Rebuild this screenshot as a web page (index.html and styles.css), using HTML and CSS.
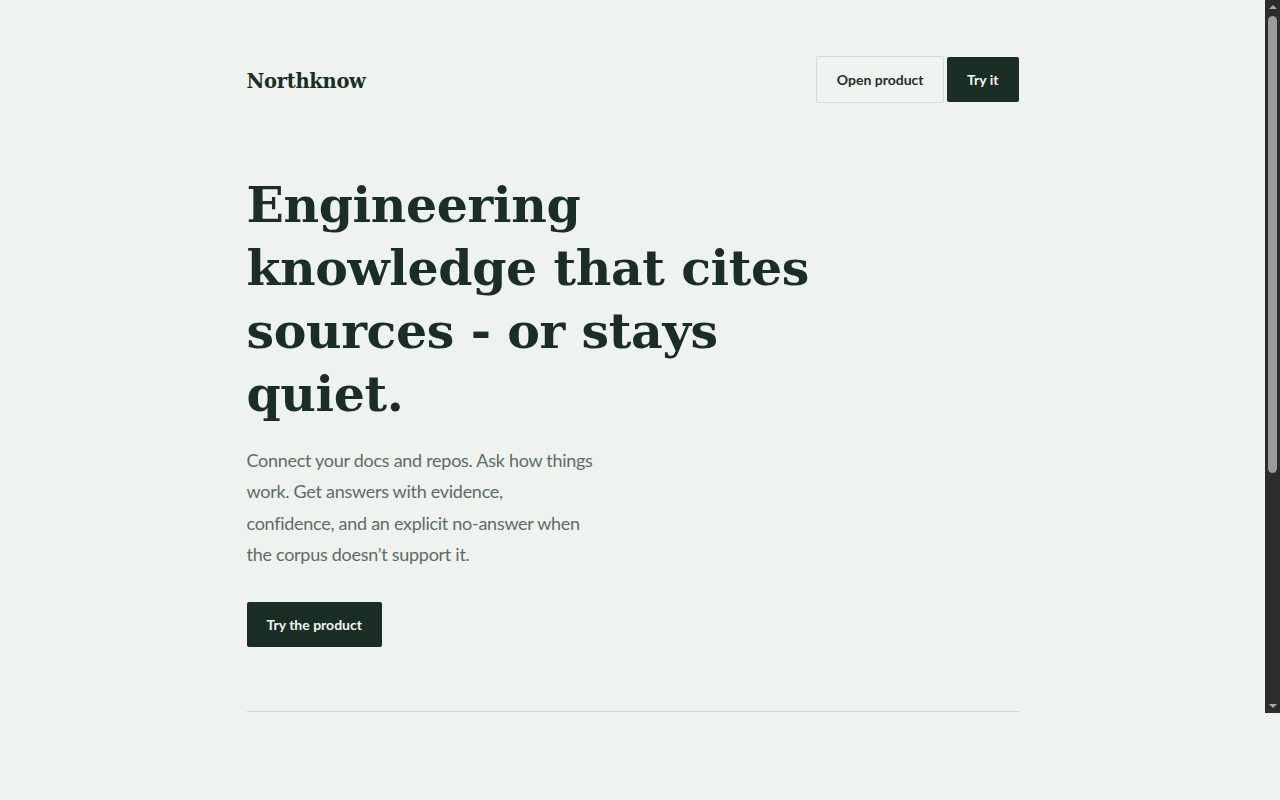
FILE: index.html
```html
<!DOCTYPE html>
<html lang="en">
<head>
<meta charset="utf-8">
<title>Northknow</title>
<link rel="stylesheet" href="styles.css">
</head>
<body>
<div class="frame">
  <div class="viewport">
    <div class="page">
      <header class="topbar">
        <div class="logo">Northknow</div>
        <nav class="actions">
          <a class="btn btn-ghost" href="#">Open product</a>
          <a class="btn btn-solid" href="#">Try it</a>
        </nav>
      </header>
      <section class="hero">
        <h1 class="hero-title">Engineering knowledge that cites sources - or stays quiet.</h1>
        <p class="hero-lede">Connect your docs and repos. Ask how things work. Get answers with evidence,<br>confidence, and an explicit no-answer when the corpus doesn’t support it.</p>
        <a class="btn btn-solid btn-cta" href="#">Try the product</a>
      </section>
      <hr class="divider">
    </div>
  </div>
  <div class="scrollbar" aria-hidden="true">
    <div class="sb-btn sb-up"></div>
    <div class="sb-track">
      <div class="sb-thumb"></div>
    </div>
    <div class="sb-btn sb-down"></div>
  </div>
</div>
</body>
</html>
```
FILE: styles.css
```css
* { box-sizing: border-box; }
html, body {
  margin: 0;
  padding: 0;
  height: 100%;
  overflow: hidden;
  background: #eef3ef;
}
.frame {
  display: flex;
  height: 713px;
}
.viewport {
  flex: 1;
  overflow: hidden;
  background: #eef3ef;
}
.scrollbar {
  width: 15px;
  flex: none;
  display: flex;
  flex-direction: column;
  background: #2c2c2c;
}
.sb-btn {
  height: 15px;
  flex: none;
  display: flex;
  align-items: center;
  justify-content: center;
}
.sb-up::before,
.sb-down::before {
  content: "";
  width: 0;
  height: 0;
  border-left: 4px solid transparent;
  border-right: 4px solid transparent;
}
.sb-up::before {
  border-bottom: 4px solid #a9a9a9;
  margin-top: -2px;
}
.sb-down::before {
  border-top: 4px solid #a9a9a9;
  margin-top: 1px;
}
.sb-track {
  flex: 1;
  padding: 1px 3px 0 3px;
}
.sb-thumb {
  height: 457px;
  background: #9b9b9b;
  border-radius: 5px;
}
.page {
  width: 772px;
  margin: 0 auto;
  padding-top: 56px;
  color: #1a2e25;
  font-family: "Lato", "Liberation Sans", sans-serif;
}
.topbar {
  display: flex;
  align-items: center;
  justify-content: space-between;
}
.logo {
  font-family: "DejaVu Serif", "Liberation Serif", serif;
  font-weight: 700;
  font-size: 19.5px;
  letter-spacing: -0.3px;
  color: #1a2e25;
  padding-top: 3px;
}
.actions {
  display: flex;
  align-items: center;
  gap: 3px;
}
.btn {
  display: inline-flex;
  align-items: center;
  justify-content: center;
  text-decoration: none;
  font-family: "Lato", "Liberation Sans", sans-serif;
  font-weight: 700;
  font-size: 14px;
  border-radius: 2px;
  height: 45px;
  padding: 0 20px;
}
.btn-ghost {
  height: 47px;
  padding: 0 19.5px;
  border: 1px solid #d3dbd6;
  background: #f0f4f1;
  color: #1f2f28;
}
.btn-solid {
  background: #1a2e25;
  color: #f2f6f3;
}
.hero {
  margin-top: 71px;
}
.hero-title {
  margin: 0;
  width: 600px;
  font-family: "DejaVu Serif", "Liberation Serif", serif;
  font-weight: 700;
  font-size: 49px;
  line-height: 63px;
  letter-spacing: -0.4px;
  color: #1a2e25;
}
.hero-lede {
  margin: 19px 0 0;
  width: 352px;
  font-size: 18px;
  line-height: 31.3px;
  letter-spacing: -0.28px;
  color: #5d6d66;
}
.btn-cta {
  margin-top: 32px;
}
.divider {
  margin: 64px 0 0;
  border: 0;
  border-top: 1px solid #d2d9d4;
}
```
